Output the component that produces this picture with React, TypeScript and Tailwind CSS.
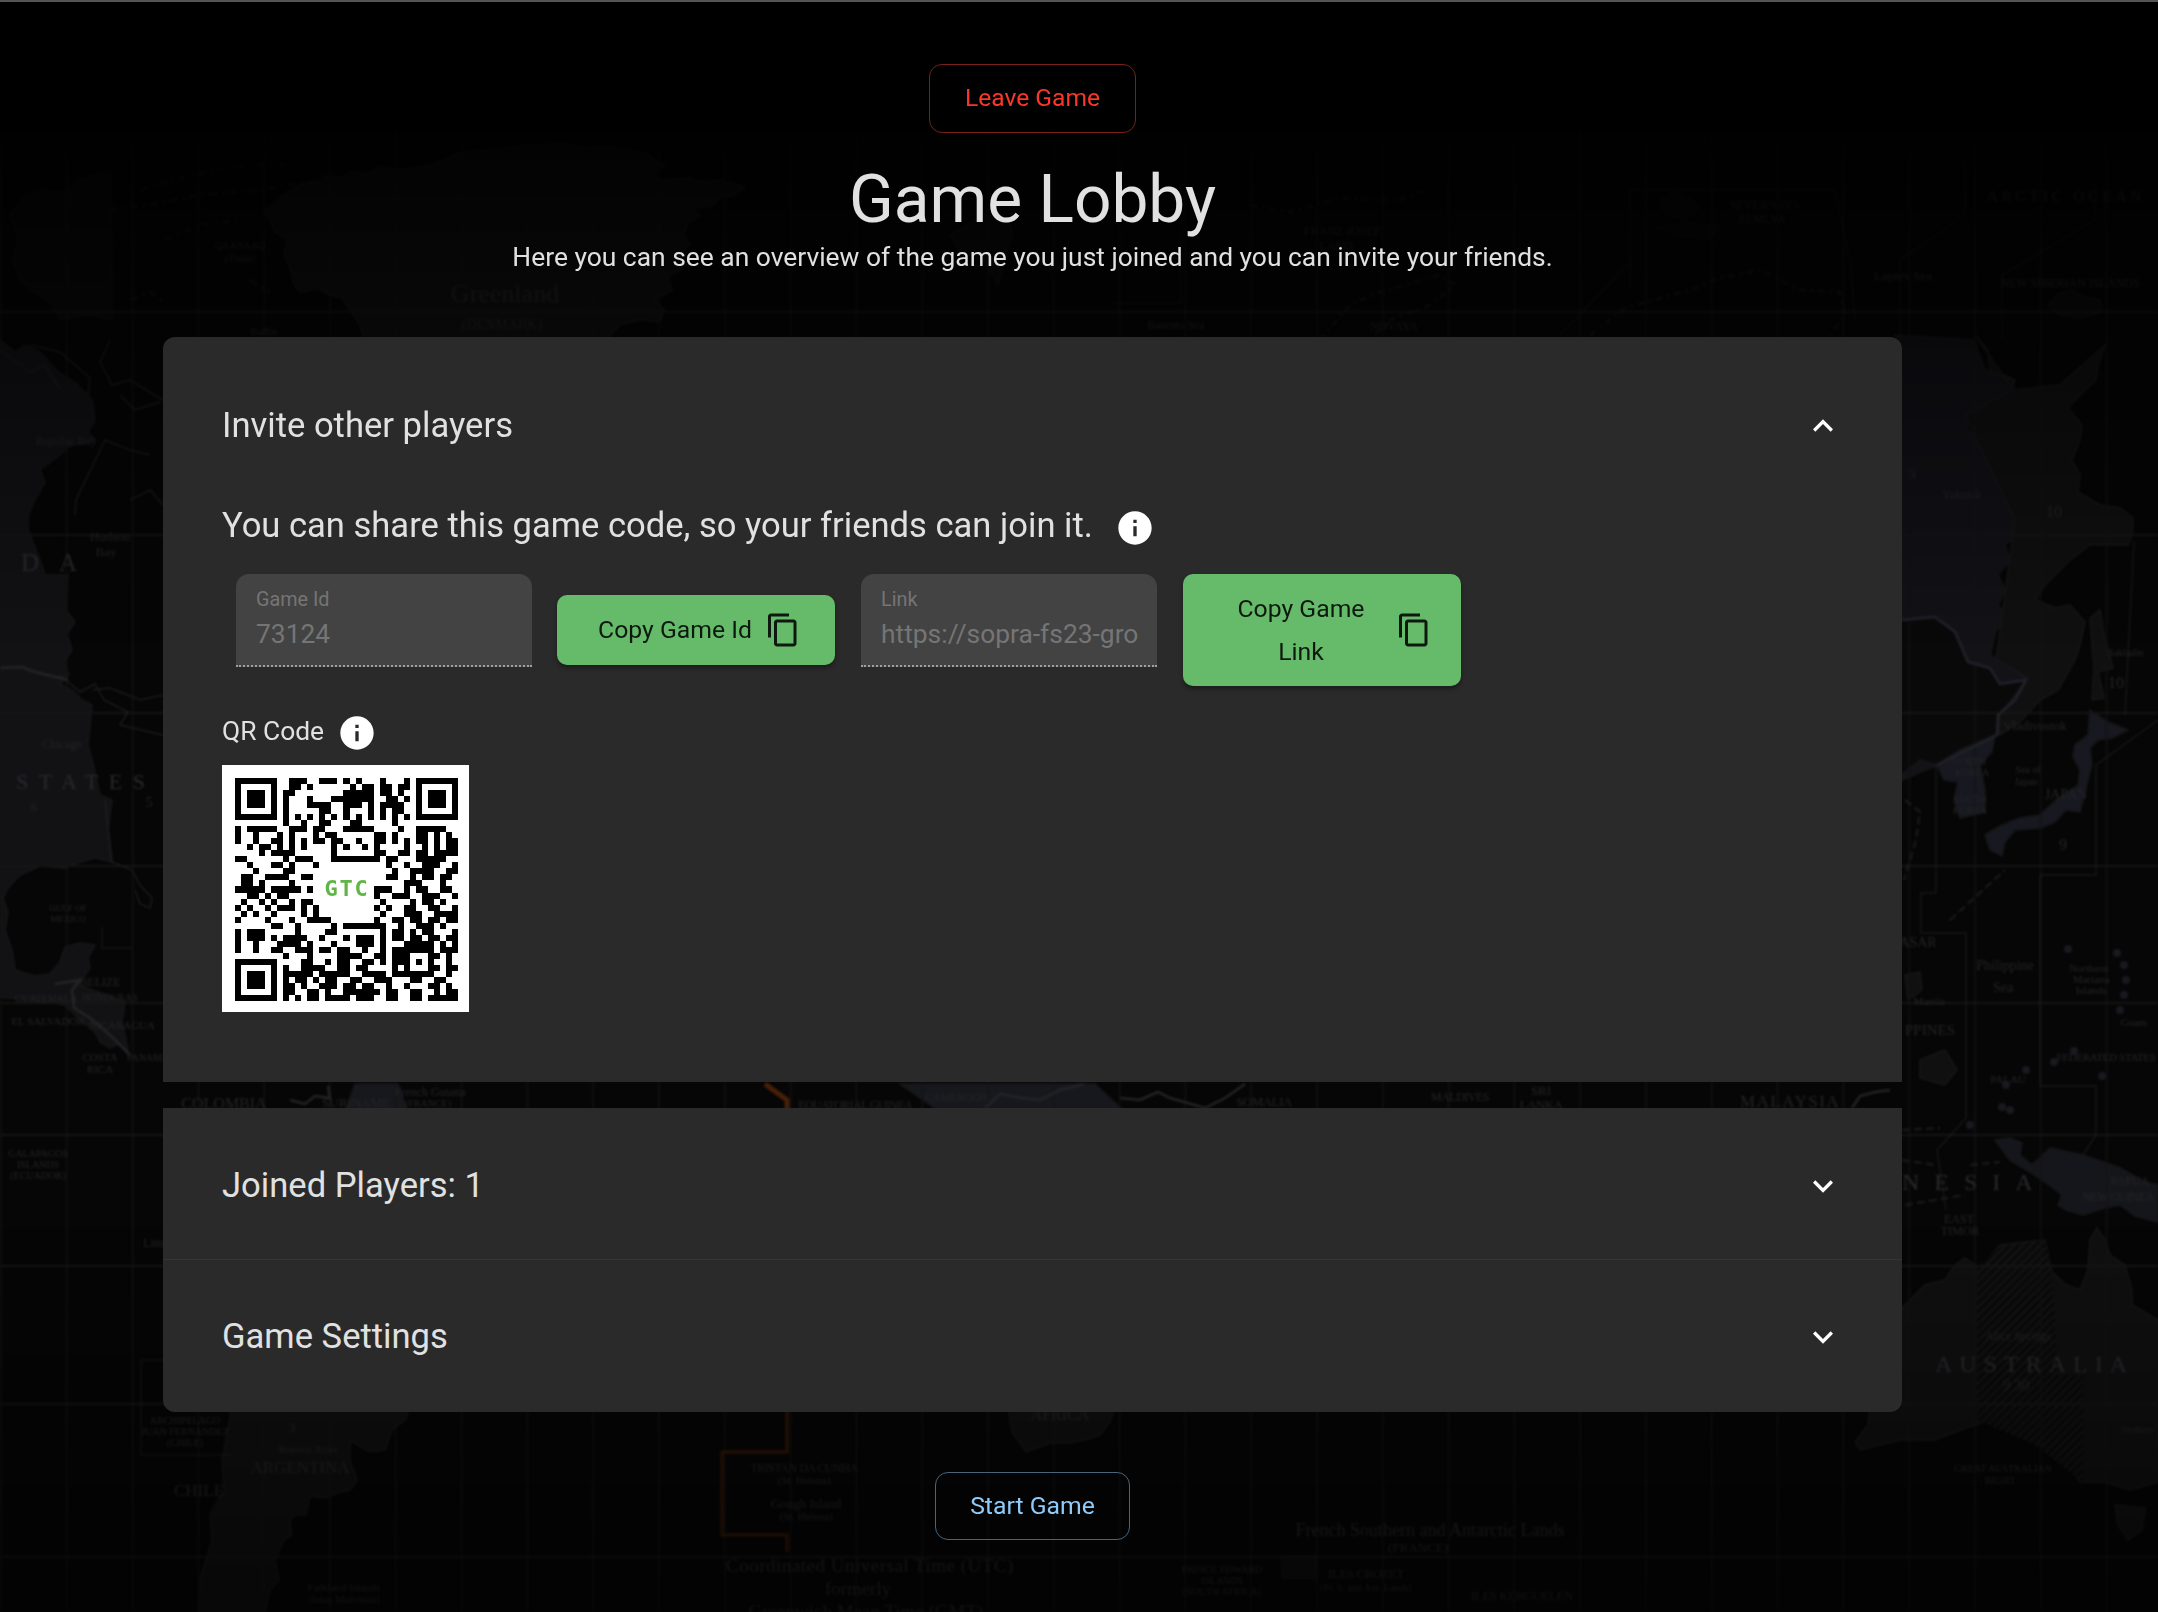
import React from "react";

const FINDER = ["#######", "#.....#", "#.###.#", "#.###.#", "#.###.#", "#.....#", "#######"];

/* Data modules of the 37x37 code; finders and timing rows are stamped on top. */
const QR_ROWS: string[] = [
  ".........###..###.#.#...#...#........",
  ".........##.#......#.##.##.##........",
  "........##........#####.##.#.........",
  "........#...#...#######..##.#........",
  "........#...####..###.#.####.........",
  "........#.....##..#...#.#.##.........",
  ".....................................",
  "........#..#..##...##.....#..........",
  "#.#####..###.##...#####....#..#####..",
  "#..#...#.#...#.##......##.#...##.#.#.",
  "#..#..##.#.#.##.##..#..##.#.#.##.#.##",
  "..#.####.#.#....#.#..#.#....#..#.#.##",
  "....#.####......#......##..##.##.####",
  "##......#.###...########.##...#####..",
  "..#...##.#...#...........#..#..###..#",
  "...#....##................#..####..##",
  ".##..####..##............##..#.##.##.",
  ".##.#....#..................###...#..",
  "#####..####.#..........###..#.##..##.",
  "..##.####..............#..###..###..#",
  ".#..#.#..#.##...........#....#.##.#..",
  "#.#..#####.#.#.........#.#..##..##..#",
  ".#.#..#....#.#..........#...###..####",
  "#....#...#..####.......#..##.##.##.##",
  "......##..#.....#.#######..#..###.#..",
  "#.###.....#....##.......#.##.#.##...#",
  "#.###.#.####..#...#.###.#.##.##.##.##",
  "#..#..#####.#...#...###.#...#####.#.#",
  "#..#..##..###.##.##..#..#.##....#.###",
  "........#...#....####..##.##....##.#.",
  "...........##..#.##..##.#.##....#..#.",
  "........#..####..##.##....#.....##.##",
  "........#####.#####..####.#######..#.",
  "........#.##.#.##..##..###...##..##..",
  "........##.#..###.##.##..#..#...##.#.",
  "........##..##.#..######.##..##..#.##",
  "........#.#.##.####.###..##..##.#####",
];

function isDark(row: number, col: number): boolean {
  if (row < 8 && col < 8) return FINDER[row]?.[col] === "#";
  if (row < 8 && col > 28) return FINDER[row]?.[col - 30] === "#";
  if (row > 28 && col < 8) return FINDER[row - 30]?.[col] === "#";
  if (row === 6 || col === 6) return (row + col) % 2 === 0;
  if (Math.abs(row - 30) <= 2 && Math.abs(col - 30) <= 2) {
    return Math.max(Math.abs(row - 30), Math.abs(col - 30)) !== 1;
  }
  return QR_ROWS[row][col] === "#";
}

function QrCode() {
  const cells: React.ReactElement[] = [];
  for (let r = 0; r < 37; r++) {
    let c = 0;
    while (c < 37) {
      if (!isDark(r, c)) {
        c++;
        continue;
      }
      const start = c;
      while (c < 37 && isDark(r, c)) c++;
      cells.push(<rect key={`${r}-${start}`} x={start} y={r} width={c - start} height={1} />);
    }
  }
  return (
    <div className="relative h-[247px] w-[247px] bg-white pt-[13px] pl-[13px]">
      <svg viewBox="0 0 37 37" className="h-[223px] w-[223px]" fill="#000" shapeRendering="crispEdges">
        {cells}
      </svg>
      <div className="absolute inset-0 flex items-center justify-center pl-[3px] font-['DejaVu_Sans_Mono'] text-[22px] font-bold tracking-[1.8px] text-[#5fb548]">
        GTC
      </div>
    </div>
  );
}

type Label = [number, number, number, string, number?];

const LABELS: Label[] = [
  [505, 302, 26, "Greenland", 0],
  [502, 329, 14, "(DENMARK)"],
  [240, 249, 10, "QAANAAQ"],
  [240, 262, 10, "(Thule)"],
  [264, 335, 11, "Baffin"],
  [1342, 235, 12, "FRANZ JOSEF"],
  [1336, 250, 12, "LAND"],
  [1176, 329, 12, "Barents Sea"],
  [1394, 330, 12, "NOVAYA"],
  [1765, 209, 12, "SEVERNAYA"],
  [1762, 223, 12, "ZEMLYA"],
  [2066, 201, 15, "ARCTIC  OCEAN", 4],
  [1903, 280, 13, "Laptev Sea"],
  [2070, 287, 12, "NEW SIBERIAN ISLANDS"],
  [66, 445, 12, "Repulse Bay"],
  [110, 541, 13, "Hudson"],
  [106, 556, 13, "Bay"],
  [62, 748, 12, "Chicago"],
  [34, 811, 13, "6"],
  [149, 807, 14, "5"],
  [68, 911, 9, "GULF OF"],
  [68, 922, 9, "MEXICO"],
  [100, 986, 12, "BELIZE"],
  [110, 1001, 10, "HONDURAS"],
  [46, 1002, 10, "GUATEMALA"],
  [48, 1025, 11, "EL SALVADOR"],
  [122, 1029, 11, "NICARAGUA"],
  [100, 1061, 11, "COSTA"],
  [100, 1073, 11, "RICA"],
  [148, 1061, 10, "PANAMA"],
  [38, 1157, 10, "GALAPAGOS"],
  [38, 1168, 10, "ISLANDS"],
  [38, 1179, 10, "(ECUADOR)"],
  [156, 1247, 12, "Lima"],
  [185, 1424, 10, "ARCHIPELAGO"],
  [185, 1435, 10, "JUAN FERNANDEZ"],
  [185, 1446, 10, "(CHILE)"],
  [199, 1496, 17, "CHILE", 0],
  [300, 1473, 17, "ARGENTINA"],
  [308, 1453, 11, "Buenos Aires"],
  [292, 1432, 13, "3"],
  [344, 1591, 11, "Falkland Islands"],
  [344, 1603, 11, "(Islas Malvinas)"],
  [224, 1109, 16, "COLOMBIA", 0],
  [356, 1107, 13, "SURINAME"],
  [430, 1096, 12, "French Guiana"],
  [428, 1107, 10, "(FRANCE)"],
  [855, 1109, 12, "EQUATORIAL GUINEA", -0.6],
  [957, 1101, 11, "CAMEROON"],
  [1264, 1106, 13, "SOMALIA", -0.5],
  [1460, 1101, 12, "MALDIVES", -0.5],
  [1541, 1095, 13, "SRI"],
  [1541, 1109, 13, "LANKA", -0.5],
  [1790, 1107, 17, "MALAYSIA", 1.5],
  [1060, 1420, 16, "AFRICA"],
  [804, 1472, 12, "TRISTAN DA CUNHA", -0.5],
  [804, 1484, 11, "(St. Helena)"],
  [806, 1508, 13, "Gough Island"],
  [806, 1520, 11, "(St. Helena)"],
  [870, 1572, 19, "Coordinated Universal Time (UTC)", 0.5],
  [858, 1595, 19, "formerly"],
  [866, 1618, 19, "Greenwich Mean Time (GMT)"],
  [1430, 1536, 18, "French Southern and Antarctic Lands"],
  [1418, 1552, 13, "(FRANCE)"],
  [1222, 1573, 10, "PRINCE EDWARD"],
  [1222, 1584, 10, "ISLANDS"],
  [1222, 1595, 10, "(SOUTH AFRICA)"],
  [1366, 1578, 13, "ILES CROZET", -0.5],
  [1366, 1591, 10, "(Fr. S. and Ant. Lands)"],
  [1522, 1600, 13, "ILES KERGUELEN", -0.5],
  [1912, 479, 15, "9"],
  [1962, 499, 12, "Yakutsk"],
  [2054, 517, 16, "10"],
  [2116, 688, 16, "10"],
  [2126, 656, 10, "Sakhalin"],
  [2035, 730, 13, "Vladivostok"],
  [1969, 765, 10, "NORTH"],
  [1972, 776, 10, "KOREA"],
  [1970, 803, 10, "SOUTH"],
  [1970, 814, 10, "KOREA"],
  [2028, 773, 10, "Sea of"],
  [2026, 785, 10, "Japan"],
  [2066, 799, 14, "JAPAN", 0],
  [2063, 850, 16, "9"],
  [1918, 947, 14, "ASAR"],
  [2005, 970, 14, "Philippine", 0],
  [2003, 992, 14, "Sea"],
  [1929, 1005, 11, "Manila"],
  [1930, 1035, 15, "PPINES", 0],
  [2089, 972, 11, "Northern"],
  [2091, 983, 11, "Mariana"],
  [2091, 994, 11, "Islands"],
  [2134, 1026, 11, "Guam"],
  [2106, 1061, 11, "FEDERATED STATES", -0.3],
  [2008, 1083, 11, "PALAU"],
  [2130, 1185, 12, "PAPUA"],
  [2118, 1201, 12, "NEW GUINEA", -0.5],
  [1959, 1223, 12, "EAST"],
  [1960, 1235, 12, "TIMOR"],
  [2018, 1340, 12, "Alice Springs"],
  [2016, 1390, 15, "9 30"],
  [2138, 1433, 11, "Sydney"],
  [2003, 1472, 10, "GREAT AUSTRALIAN"],
  [2000, 1484, 10, "BIGHT"],
];

const H_LINES = [312, 535, 713, 866, 1003, 1135, 1266, 1404, 1557];

/* Faint world map behind the page. */
function MapBackground() {
  return (
    <svg className="absolute inset-0 h-full w-full" viewBox="0 0 2158 1612" aria-hidden="true">
      <defs>
        <linearGradient id="fade" x1="0" y1="0" x2="0" y2="1">
          <stop offset="0" stopColor="#000" stopOpacity="1" />
          <stop offset="0.06" stopColor="#000" stopOpacity="0.95" />
          <stop offset="0.1" stopColor="#000" stopOpacity="0.75" />
          <stop offset="0.2" stopColor="#000" stopOpacity="0.48" />
          <stop offset="0.4" stopColor="#000" stopOpacity="0" />
          <stop offset="0.76" stopColor="#000" stopOpacity="0" />
          <stop offset="1" stopColor="#000" stopOpacity="0.5" />
        </linearGradient>
        <pattern id="hatch" width="6" height="6" patternUnits="userSpaceOnUse" patternTransform="rotate(45)">
          <rect width="6" height="6" fill="#0a0a0a" />
          <rect width="2" height="6" fill="#161616" />
        </pattern>
        <filter id="soft" colorInterpolationFilters="sRGB">
          <feGaussianBlur stdDeviation="0.8" />
        </filter>
      </defs>
      <rect width="2158" height="1612" fill="#060606" />
      <g filter="url(#soft)">
        <g fill="#101011" stroke="#18181a" strokeWidth="1.5">
          <path d="M265 210 275 203 282 196 300 185 318 182 325 176 340 178 352 172 368 174 380 167 400 170 430 165 448 158 460 152 490 150 520 146 560 143 590 148 610 146 650 155 655 161 665 165 652 172 660 180 690 178 700 182 720 180 745 187 735 195 718 198 712 206 692 208 700 216 688 222 684 235 690 245 678 255 684 268 668 276 672 290 655 300 664 310 660 322 640 320 620 325 610 335 606 345 365 345 360 325 350 310 342 298 330 295 318 288 300 292 294 284 290 268 284 255 287 240 275 232Z" />
          <path d="M10 215 25 196 40 190 60 192 80 180 95 175 110 170 112 240 112 320 90 315 60 320 48 300 30 290 20 278 12 260 18 240Z" opacity="0.6" />
          <path fill="#121215" d="M0 340 15 352 25 345 40 352 58 372 78 385 92 400 95 420 88 432 95 440 70 446 60 455 40 470 45 482 35 500 28 515 28 530 40 560 45 575 68 575 66 610 75 622 67 634 72 650 64 662 69 675 60 684 72 690 82 700 92 705 90 725 88 745 92 760 100 795 112 800 108 830 112 862 95 858 80 862 65 868 40 866 20 875 8 888 3 898 8 912 5 930 12 950 15 970 34 976 50 974 60 962 65 947 80 943 95 945 88 958 90 968 78 985 98 992 125 1002 122 1022 128 1050 118 1044 110 1048 100 1042 95 1032 78 1018 65 1005 40 1001 0 997Z" />
          <path d="M232 1405 410 1405 405 1420 392 1430 388 1442 385 1450 370 1452 358 1445 350 1440 350 1460 357 1480 350 1490 340 1492 325 1498 310 1496 306 1515 296 1514 290 1520 292 1535 284 1540 275 1560 279 1580 270 1590 265 1612 198 1612 200 1580 212 1540 210 1515 224 1490 222 1460 228 1430Z" />
          <path d="M1008 1405 1115 1405 1110 1422 1100 1435 1085 1440 1070 1443 1050 1443 1026 1452 1018 1440 1012 1432Z" />
          <path fill="#121217" d="M1895 335 1975 340 1978 352 1985 370 2002 374 2015 380 2010 400 1990 408 1965 415 1968 430 1980 440 1998 450 2008 465 2008 490 2020 510 2015 520 2018 535 2005 545 2010 560 1998 575 2005 590 1998 605 2008 620 1996 630 1990 655 2028 680 2012 695 1998 735 1937 765 1902 780 1895 780Z" />
          <path d="M1975 335 1988 350 1990 372 2013 380 2012 390 2060 385 2105 345 2098 365 2096 380 2075 400 2068 408 2082 425 2080 440 2072 460 2080 475 2078 492 2100 505 2120 508 2133 518 2132 535 2128 545 2090 545 2070 560 2045 585 2035 600 2055 608 2070 605 2085 622 2080 645 2075 660 2058 690 2040 700 2020 722 2000 735 1998 690 2028 678 1996 660 2015 520 1965 415 2013 390Z" />
          <path fill="#09090a" d="M1895 620 1935 617 1955 630 1968 662 1990 668 2000 684 2026 680 2010 702 1998 715 1998 735 1937 765 1920 760 1908 770 1895 778Z" />
          <path fill="#171820" d="M1937 765 1960 750 1995 735 1992 752 1980 765 1985 790 1985 812 1960 818 1954 800 1958 782 1944 780Z" />
          <path fill="#171820" d="M1985 835 2000 826 2020 818 2040 815 2056 800 2078 785 2080 770 2073 757 2075 745 2088 735 2090 710 2108 722 2128 730 2112 738 2098 740 2090 748 2092 765 2088 780 2080 812 2066 810 2055 822 2040 828 2015 830 2005 842 2002 856 1990 850Z" />
          <path d="M2090 618 2100 610 2104 635 2113 668 2098 672 2104 698 2092 700 2094 668Z" />
          <path d="M1920 1060 1945 1050 1957 1070 1945 1085 1920 1078ZM1905 975 1920 972 1922 990 1908 1000Z" />
          <path fill="#15161b" d="M1995 1140 2010 1138 2022 1143 2020 1155 2032 1165 2050 1148 2083 1155 2120 1168 2145 1182 2158 1185 2158 1222 2135 1216 2120 1205 2104 1208 2083 1215 2066 1210 2058 1205 2062 1195 2045 1182 2030 1172 2018 1165 2010 1160Z" />
          <path d="M1895 1315 1910 1300 1925 1285 1945 1280 1955 1265 1965 1258 1978 1268 1992 1255 2000 1245 2045 1240 2048 1255 2052 1272 2066 1285 2080 1290 2088 1270 2090 1240 2097 1228 2105 1240 2110 1255 2125 1265 2132 1290 2132 1305 2158 1320 2158 1482 2130 1490 2105 1482 2080 1482 2068 1465 2050 1455 2035 1442 2010 1425 1990 1420 1960 1430 1935 1440 1900 1440 1860 1450 1855 1442 1868 1425 1870 1405 1895 1405Z" />
          <path stroke="none" fill="url(#hatch)" d="M1977 1268 2000 1247 2045 1240 2052 1272 2058 1375 2083 1375 2083 1482 2035 1445 1977 1420Z" />
          <path d="M2115 1505 2145 1508 2142 1530 2128 1540 2118 1525Z" />
          <path d="M355 1084 398 1084 408 1112 345 1112Z M900 1084 1095 1084 1125 1112 940 1112Z" fill="#17181d" />
          <path d="M1282 1556h34v22h-34Z" opacity="0.8" />
          <path d="M950 235 962 228 985 215 1010 222 1012 235 1003 265 998 284 985 262 960 250Z" opacity="0.8" />
          <path d="M2048 305 2058 294 2072 290 2085 298 2100 300 2102 312 2080 318 2060 315Z" opacity="0.7" />
          <path d="M1660 200 1675 192 1690 198 1700 208 1685 220 1665 215Z M1655 228 1690 222 1722 226 1710 238 1680 236Z" opacity="0.45" />
        </g>
        <g stroke="#151515" strokeWidth="2">
          {Array.from({ length: 33 }, (_, i) => (
            <line key={i} x1={1 + i * 65.8} x2={1 + i * 65.8} y1="130" y2="1612" opacity="0.7" />
          ))}
          {H_LINES.map((y) => (
            <line key={y} x1="0" x2="2158" y1={y} y2={y} />
          ))}
        </g>
        <g fill="none" stroke="#242427" strokeWidth="2.5">
          <path d="M0 668 22 667 35 672 68 680" />
          <path stroke="#22222b" d="M1902 620 1935 617 1955 632 1968 662 1990 668 2000 684 2026 680 2015 700 1998 715 1997 735 1937 765" />
          <path d="M55 984 80 980 72 990 74 1008 90 1018 110 1035 130 1055" />
          <path d="M290 1100 305 1104 315 1096 330 1098 328 1086 M985 1108 1000 1094 1022 1098 1040 1100 1060 1090 1084 1084 M1120 1098 1140 1100 1158 1092 1170 1098 1205 1108 1225 1098 1245 1084 M1852 1108 1860 1096 1875 1092 1890 1090" />
          <path d="M60 675 80 692 95 684 104 700 128 712 120 725 163 735 M92 690 110 688 140 700 163 695 M105 800 112 862 132 870 140 885 152 898 150 908 140 904 135 890" strokeWidth="1.5" opacity="0.7" />
          <path d="M0 350 30 372 45 365 60 390 M30 345 60 352 90 378 88 395 M110 340 100 362 112 385 130 380 163 400 M75 515 76 500 105 440 130 450 150 455 M120 395 135 410 160 402 M130 500 150 490 163 505" strokeWidth="1.5" opacity="0.7" />
          <path d="M1936 765V893H1921V933H1966V1118L1937 1150 1946 1210 M2134 540 2125 715 M2158 720 2096 765V875H2040V1086H2096V1135L2083 1155" strokeWidth="1.5" opacity="0.55" />
          <path d="M163 1360H141V1455H232 M102 927V948H132" strokeWidth="1.5" opacity="0.5" />
          <path d="M1112 303H1181V190 M1630 290V190H1835L1850 260 1855 320 M1965 160V215L1900 260V340 M2095 180V220L2002 275V340 M1560 335 1632 260" strokeWidth="1.5" opacity="0.35" />
          <path d="M1320 340 1350 305 1380 292 1440 275 1455 285 1430 305 1390 320 1370 340 M1590 335 1625 308 1690 290 1720 278 1760 270 1800 290 1840 292 1845 315 1830 335 M1250 205 1290 212 1340 198 1400 200 1425 190" strokeWidth="3" opacity="0.4" strokeDasharray="7 5 3 4" />
          <path d="M140 190 190 175 250 165 300 165 M110 210 150 205 200 195 260 190 320 180 M165 240 200 225 240 220 M250 280 270 292 M130 300 150 292 165 302" strokeWidth="3" opacity="0.35" strokeDasharray="8 5 3 4" />
          <path d="M1950 920 2005 870 M1905 1205 1965 1195 M1902 1130 1940 1128 M1902 1160 1935 1165 M1970 1165 2000 1162 M1905 800 1920 812 1916 840 1904 880" strokeWidth="2.5" opacity="0.6" strokeDasharray="8 4" />
        </g>
        <g fill="#191a1f">
          {[[2068, 949], [2117, 953], [2124, 965], [2126, 980], [2124, 995], [2120, 1010], [2026, 1070], [2006, 1085], [2002, 1107], [2010, 1110], [2054, 1062], [2074, 1051], [2102, 1076], [1970, 1125]].map(([x, y]) => (
            <circle key={`${x}-${y}`} cx={x} cy={y} r="4" />
          ))}
        </g>
        <g fill="none" stroke="#4a1f08" strokeWidth="3.5">
          <path d="M765 1084 787 1100V1112" strokeWidth="5" />
          <path d="M787 1405V1452H722V1535H787V1552" opacity="0.6" />
        </g>
        <g fill="#252527" fontFamily="Liberation Serif, serif" textAnchor="middle">
          {LABELS.map(([x, y, size, text, spacing]) => (
            <text key={`${x}-${y}`} x={x} y={y} fontSize={size} letterSpacing={spacing ?? 0}>
              {text}
            </text>
          ))}
        </g>
        <g fill="#2a2a2e" fontFamily="Liberation Serif, serif">
          <text x="21" y="571" fontSize="25" letterSpacing="20">DA</text>
          <text x="16" y="789" fontSize="22" letterSpacing="10.5">STATES</text>
          <text x="1902" y="1190" fontSize="24" letterSpacing="15">NESIA</text>
          <text x="1935" y="1372" fontSize="24" letterSpacing="7">AUSTRALIA</text>
        </g>
      </g>
      <rect width="2158" height="1612" fill="url(#fade)" />
    </svg>
  );
}

function InfoIcon() {
  return (
    <svg viewBox="0 0 24 24" className="h-[40px] w-[40px] shrink-0" fill="#fff">
      <path d="M12 2C6.48 2 2 6.48 2 12s4.48 10 10 10 10-4.48 10-10S17.52 2 12 2zm1 15h-2v-6h2v6zm0-8h-2V7h2v2z" />
    </svg>
  );
}

function CopyIcon() {
  return (
    <svg viewBox="0 0 24 24" className="h-[36px] w-[36px] shrink-0" fill="currentColor">
      <path d="M16 1H4c-1.1 0-2 .9-2 2v14h2V3h12V1zm3 4H8c-1.1 0-2 .9-2 2v14c0 1.1.9 2 2 2h11c1.1 0 2-.9 2-2V7c0-1.1-.9-2-2-2zm0 16H8V7h11v14z" />
    </svg>
  );
}

function Chevron({ up = false }: { up?: boolean }) {
  return (
    <svg viewBox="0 0 24 24" className={up ? "h-[40px] w-[40px] rotate-180" : "h-[40px] w-[40px]"} fill="#fff">
      <path d="M16.59 8.59 12 13.17 7.41 8.59 6 10l6 6 6-6z" />
    </svg>
  );
}

function Field({ label, value }: { label: string; value: string }) {
  return (
    <div className="relative h-[93px] w-[296px] rounded-t-[13px] bg-[#434343] px-5 pt-[14px] text-[#757575]">
      <div className="text-[19.8px] leading-6">{label}</div>
      <div className="mt-[3px] text-[26.4px] leading-[38px] whitespace-nowrap">{value}</div>
      <div className="absolute inset-x-0 bottom-0 border-b-2 border-dotted border-[#a0a0a0]" />
    </div>
  );
}

const greenButton =
  "flex w-[278px] items-center rounded-[10px] bg-[#66bb6a] text-[24.75px] text-[#0d190e] shadow-[0_3px_4px_rgba(0,0,0,0.35)]";

export default function App() {
  return (
    <div className="relative h-[1612px] w-[2158px] overflow-hidden bg-black font-['Roboto',sans-serif] text-[#e1e1e1]">
      <MapBackground />
      <div className="relative flex h-full flex-col border-t-2 border-[#555]">
        <main className="ml-[163px] flex w-[1739px] flex-col items-center pt-[62px]">
          <button className="h-[69px] w-[207px] rounded-[13px] border-[1.65px] border-[#7a201a] text-[24.6px] text-[#f9382b]">
            Leave Game
          </button>
          <h1 className="mt-[28px] text-[65.8px] leading-[77px]">Game Lobby</h1>
          <p className="text-[26.4px] leading-[38px]">
            Here you can see an overview of the game you just joined and you can invite your friends.
          </p>

          <section className="mt-[61px] h-[745px] w-full rounded-t-[12px] bg-[#2a2a2a] px-[59px]">
            <div className="flex h-[176px] items-center justify-between">
              <h2 className="text-[34.6px] leading-[40px]">Invite other players</h2>
              <div className="pt-[1px]">
                <Chevron up />
              </div>
            </div>
            <div className="-mt-[11px] flex h-[46px] items-center gap-[22px]">
              <h3 className="text-[34.55px] leading-[40px]">You can share this game code, so your friends can join it.</h3>
              <div className="pt-[5px]">
                <InfoIcon />
              </div>
            </div>
            <div className="mt-[26px] ml-[14px] flex h-[112px] items-start gap-[26px]">
              <Field label="Game Id" value="73124" />
              <button className={`${greenButton} -ml-px mt-[21px] h-[70px] justify-center gap-[13px] pl-[7px]`}>
                <span>Copy Game Id</span>
                <CopyIcon />
              </button>
              <Field label="Link" value="https://sopra-fs23-gro" />
              <button className={`${greenButton} h-[112px] justify-between pr-[29px] pl-[42px]`}>
                <span className="w-[152px] leading-[43.3px]">Copy Game Link</span>
                <CopyIcon />
              </button>
            </div>
            <div className="mt-[23px] flex h-[44px] items-center gap-[13px]">
              <span className="text-[26.4px] leading-[30px]">QR Code</span>
              <div className="pt-[3px]">
                <InfoIcon />
              </div>
            </div>
            <div className="mt-[12px]">
              <QrCode />
            </div>
          </section>

          <section className="mt-[26px] w-full rounded-b-[12px] bg-[#2a2a2a]">
            <div className="flex h-[152px] items-center justify-between border-b border-[#363636] px-[59px] pt-[2px]">
              <h2 className="text-[34.6px] leading-[40px]">Joined Players: 1</h2>
              <div className="pt-[2px]">
                <Chevron />
              </div>
            </div>
            <div className="flex h-[152px] items-center justify-between px-[59px]">
              <h2 className="text-[34.6px] leading-[40px]">Game Settings</h2>
              <div className="pt-[2px]">
                <Chevron />
              </div>
            </div>
          </section>

          <button className="mt-[60px] h-[68px] w-[195px] rounded-[13px] border-[1.65px] border-[#48657d] text-[24.75px] text-[#90caf9]">
            Start Game
          </button>
        </main>
      </div>
    </div>
  );
}
